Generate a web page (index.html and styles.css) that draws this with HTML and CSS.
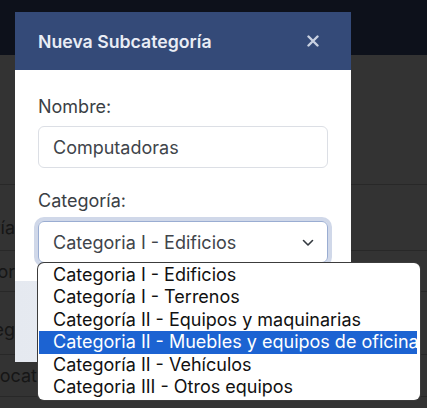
FILE: index.html
```html
<!DOCTYPE html>
<html lang="es">
<head>
<meta charset="utf-8">
<title>Nueva Subcategoría</title>
<link rel="stylesheet" href="styles.css">
</head>
<body>
<div class="page">
  <div class="topbar"></div>
  <div class="table">
    <div class="row row-a"></div>
    <div class="row row-b"><div class="clip w15"><span>Categoría</span></div></div>
    <div class="row row-c"><div class="clip w15"><span>Computador</span></div></div>
    <div class="row row-d"><div class="clip w15"><span>Categ</span></div></div>
    <div class="row row-e"><div class="clip w36"><span>Geocat</span></div></div>
  </div>
</div>

<div class="modal">
  <div class="modal-header">
    <span class="modal-title">Nueva Subcategoría</span>
    <svg class="close" width="12" height="12" viewBox="0 0 12 12"><path d="M1.5 1.5 L10.5 10.5 M10.5 1.5 L1.5 10.5" stroke="currentColor" stroke-width="2.4" stroke-linecap="round"/></svg>
  </div>
  <div class="modal-body">
    <div class="label">Nombre:</div>
    <div class="input">Computadoras</div>
    <div class="label label-2">Categoría:</div>
    <div class="select">
      <span>Categoria I - Edificios</span>
      <svg class="chev" width="12" height="8" viewBox="0 0 12 8"><path d="M1.5 1.5 L6 6 L10.5 1.5" fill="none" stroke="#343a40" stroke-width="1.6" stroke-linecap="round" stroke-linejoin="round"/></svg>
    </div>
  </div>
  <div class="modal-footer"></div>
</div>

<div class="dropdown">
  <div class="opt">Categoria I - Edificios</div>
  <div class="opt">Categoría I - Terrenos</div>
  <div class="opt">Categoría II - Equipos y maquinarias</div>
  <div class="opt sel">Categoria II - Muebles y equipos de oficina</div>
  <div class="opt">Categoría II - Vehículos</div>
  <div class="opt">Categoria III - Otros equipos</div>
</div>
</body>
</html>
```

FILE: styles.css
```css
* { box-sizing: border-box; }
html, body { margin: 0; padding: 0; }
body {
  width: 427px;
  height: 408px;
  overflow: hidden;
  background: #333333;
  font-family: Inter, "Noto Sans", sans-serif;
  position: relative;
}
.page { width: 100%; }
.topbar { height: 55px; background: #0d111b; }
.table { display: flex; flex-direction: column; }
.row {
  display: flex;
  align-items: center;
  border-bottom: 1px solid #282828;
  color: #161616;
  font-size: 18px;
}
.row-a { height: 130px; }
.row-b { height: 66px; padding-top: 20px; }
.row-c { height: 41px; }
.row-d { height: 63px; padding-top: 12px; }
.row-e { height: 42px; }
.clip {
  display: flex;
  justify-content: flex-end;
  overflow: hidden;
  white-space: nowrap;
}
.w15 { width: 15px; }
.w36 { width: 37px; }

.modal {
  position: absolute;
  left: 15px;
  top: 12px;
  width: 336px;
  background: #fff;
}
.modal-header {
  height: 58px;
  background: #344a78;
  display: flex;
  align-items: center;
  justify-content: space-between;
  padding: 0 32px 0 23px;
}
.modal-title {
  color: #e9edf5;
  font-size: 17.7px;
  font-weight: 600;
}
.close { color: #c9d1e1; }
.modal-body {
  padding: 23px 23px 18px 23px;
}
.label {
  color: #3b3f45;
  font-size: 18px;
  line-height: 27px;
  margin-bottom: 6px;
}
.label-2 { margin-top: 19px; margin-bottom: 7px; }
.input, .select {
  height: 42px;
  border: 1px solid #dcdfe5;
  border-radius: 6px;
  display: flex;
  align-items: center;
  padding: 0 14px;
  font-size: 18px;
  color: #40444a;
}
.select {
  border-color: #9aadd2;
  box-shadow: 0 0 0 4px #d0d8e9;
  justify-content: space-between;
  padding-right: 13px;
}
.chev { margin-top: 1px; }
.modal-footer {
  height: 81px;
  background: linear-gradient(90deg, #e5e9f0, #eef1f6);
}

.dropdown {
  position: absolute;
  left: 38px;
  top: 263px;
  width: 382px;
  height: 137px;
  background: #fff;
  border-radius: 6px;
  padding: 1px 3px 0 1px;
  box-shadow: 0 0 0 1px #3c3c3c;
}
.opt {
  height: 22.4px;
  line-height: 22.4px;
  padding-left: 14px;
  font-size: 18px;
  color: #111;
  white-space: nowrap;
}
.opt.sel { background: #1c63d2; color: #fff; }
```
